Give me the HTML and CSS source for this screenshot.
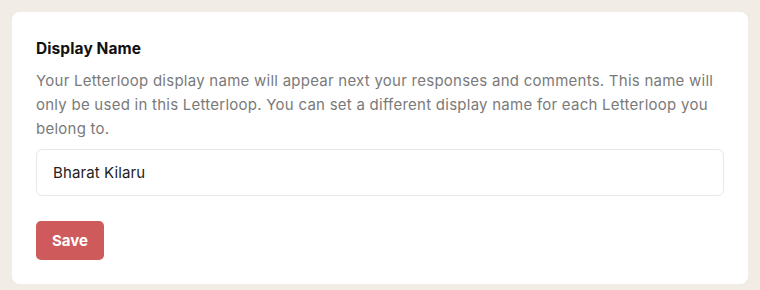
FILE: index.html
```html
<!DOCTYPE html>
<html lang="en">

<head>
    <meta charset="UTF-8">
    <meta name="viewport" content="width=device-width, initial-scale=1.0">
    <title>Display Name</title>
    <link rel="stylesheet" href="styles.css">
</head>

<body>
    <div class="card">
        <h3 class="label">Display Name</h3>
        <p class="help">Your Letterloop display name will appear next your responses and comments. This name will only be used in this Letterloop. You can set a different display name for each Letterloop you belong to.</p>
        <input class="nameInput" type="text" value="Bharat Kilaru">
        <button class="save">Save</button>
    </div>
</body>

</html>
```

FILE: styles.css
```css
body {
    margin: 0;
    padding: 12px;
    background-color: #f1ece6;
    font-family: Inter, "Open Sans", sans-serif;
}

.card {
    background-color: #fff;
    border-radius: 8px;
    padding: 28px 24px 24px;
    height: 272px;
    box-sizing: border-box;
}

.label {
    margin: 0;
    font-size: 15.5px;
    font-weight: 700;
    color: #111;
    line-height: 18px;
    letter-spacing: 0.1px;
}

.help {
    margin: 11px 0 8px;
    font-size: 15px;
    line-height: 24px;
    letter-spacing: 0.25px;
    color: #7a7a7a;
}

.nameInput {
    display: block;
    width: 100%;
    box-sizing: border-box;
    height: 47px;
    padding: 0 16px;
    border: 1px solid #e8e8e8;
    border-radius: 6px;
    font-family: inherit;
    font-size: 15px;
    letter-spacing: 0.1px;
    color: #222;
    outline: none;
}

.save {
    margin-top: 25px;
    height: 39px;
    padding: 0 16px;
    border: none;
    border-radius: 5px;
    background-color: #cf5a5b;
    color: #fff;
    font-family: inherit;
    font-size: 15px;
    font-weight: 700;
    cursor: pointer;
}
```
